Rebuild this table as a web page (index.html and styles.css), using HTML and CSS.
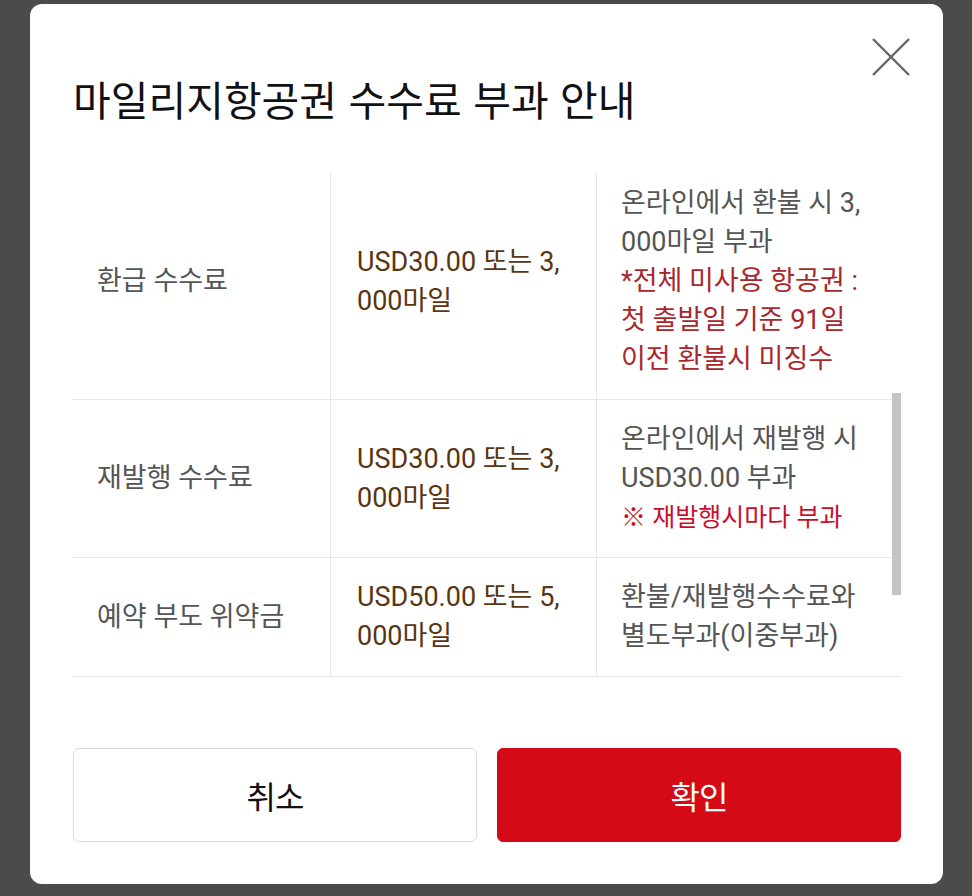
FILE: index.html
```html
<!DOCTYPE html>
<html lang="ko">
<head>
<meta charset="utf-8">
<title>마일리지항공권 수수료 부과 안내</title>
<link rel="stylesheet" href="styles.css">
</head>
<body>
<div class="modal">
  <button class="close" aria-label="닫기">
    <svg width="40" height="40" viewBox="0 0 40 40"><path d="M2 2 L38 38 M38 2 L2 38" stroke="#666" stroke-width="2.4" fill="none"/></svg>
  </button>
  <h1 class="title">마일리지항공권 수수료 부과 안내</h1>
  <div class="scroll">
    <table class="fees">
      <tr>
        <td class="name">환급 수수료</td>
        <td class="amount">USD30.00 또는 3,<br>000마일</td>
        <td class="note">온라인에서 환불 시 3,<br>000마일 부과<br><span class="warn">*전체 미사용 항공권 :<br>첫 출발일 기준 91일<br>이전 환불시 미징수</span></td>
      </tr>
      <tr>
        <td class="name">재발행 수수료</td>
        <td class="amount">USD30.00 또는 3,<br>000마일</td>
        <td class="note">온라인에서 재발행 시<br>USD30.00 부과<br><span class="alert">※ 재발행시마다 부과</span></td>
      </tr>
      <tr>
        <td class="name">예약 부도 위약금</td>
        <td class="amount">USD50.00 또는 5,<br>000마일</td>
        <td class="note">환불/재발행수수료와<br>별도부과(이중부과)</td>
      </tr>
    </table>
    <div class="thumb"></div>
  </div>
  <div class="actions">
    <button class="btn cancel">취소</button>
    <button class="btn ok">확인</button>
  </div>
</div>
</body>
</html>
```

FILE: styles.css
```css
html, body {
  margin: 0;
  padding: 0;
}
body {
  background: #4b4b4b;
  width: 972px;
  height: 896px;
  overflow: hidden;
  font-family: Roboto, "Noto Sans CJK KR", sans-serif;
}
.modal {
  position: relative;
  box-sizing: border-box;
  margin: 4px 0 0 30px;
  width: 913px;
  height: 880px;
  background: #fff;
  border-radius: 12px;
  padding: 0 42px 0 43px;
  display: flex;
  flex-direction: column;
}
.close {
  position: absolute;
  top: 33px;
  right: 32px;
  width: 40px;
  height: 40px;
  padding: 0;
  border: 0;
  background: none;
}
.close svg { display: block; }
.title {
  margin: 0;
  padding-top: 70px;
  font-family: "Noto Sans CJK KR", sans-serif;
  font-weight: 400;
  font-size: 41px;
  line-height: 48px;
  letter-spacing: 0;
  color: #111;
}
.scroll {
  position: relative;
  margin-top: 50px;
  height: 530px;
  overflow: hidden;
}
.fees {
  width: 100%;
  margin-top: -8px;
  border-collapse: collapse;
  table-layout: fixed;
  font-size: 27px;
  line-height: 39px;
}
.fees td {
  padding: 20px 24px 20px 24px;
  vertical-align: middle;
  border-bottom: 1px solid #e8e8e8;
  color: #555;
}
.fees td + td {
  border-left: 1px solid #e8e8e8;
}
.fees .name { width: 209px; }
.fees .amount { width: 215px; padding-left: 26px; color: #5a3512; }
.fees .note { padding-right: 10px; }
.warn { color: #a8272d; }
.alert { color: #c8102e; font-size: 25px; }
.thumb {
  position: absolute;
  right: 0;
  top: 221px;
  width: 9px;
  height: 202px;
  background: #c4c4c4;
}
.actions {
  margin-top: 46px;
  display: grid;
  grid-template-columns: 1fr 1fr;
  gap: 20px;
}
.btn {
  height: 94px;
  border-radius: 6px;
  font-family: "Noto Sans CJK KR", sans-serif;
  font-size: 32px;
  letter-spacing: -1px;
}
.cancel {
  background: #fff;
  border: 1px solid #dcdcdc;
  color: #111;
}
.ok {
  background: #d40a16;
  border: 1px solid #d40a16;
  color: #fff;
}
```
